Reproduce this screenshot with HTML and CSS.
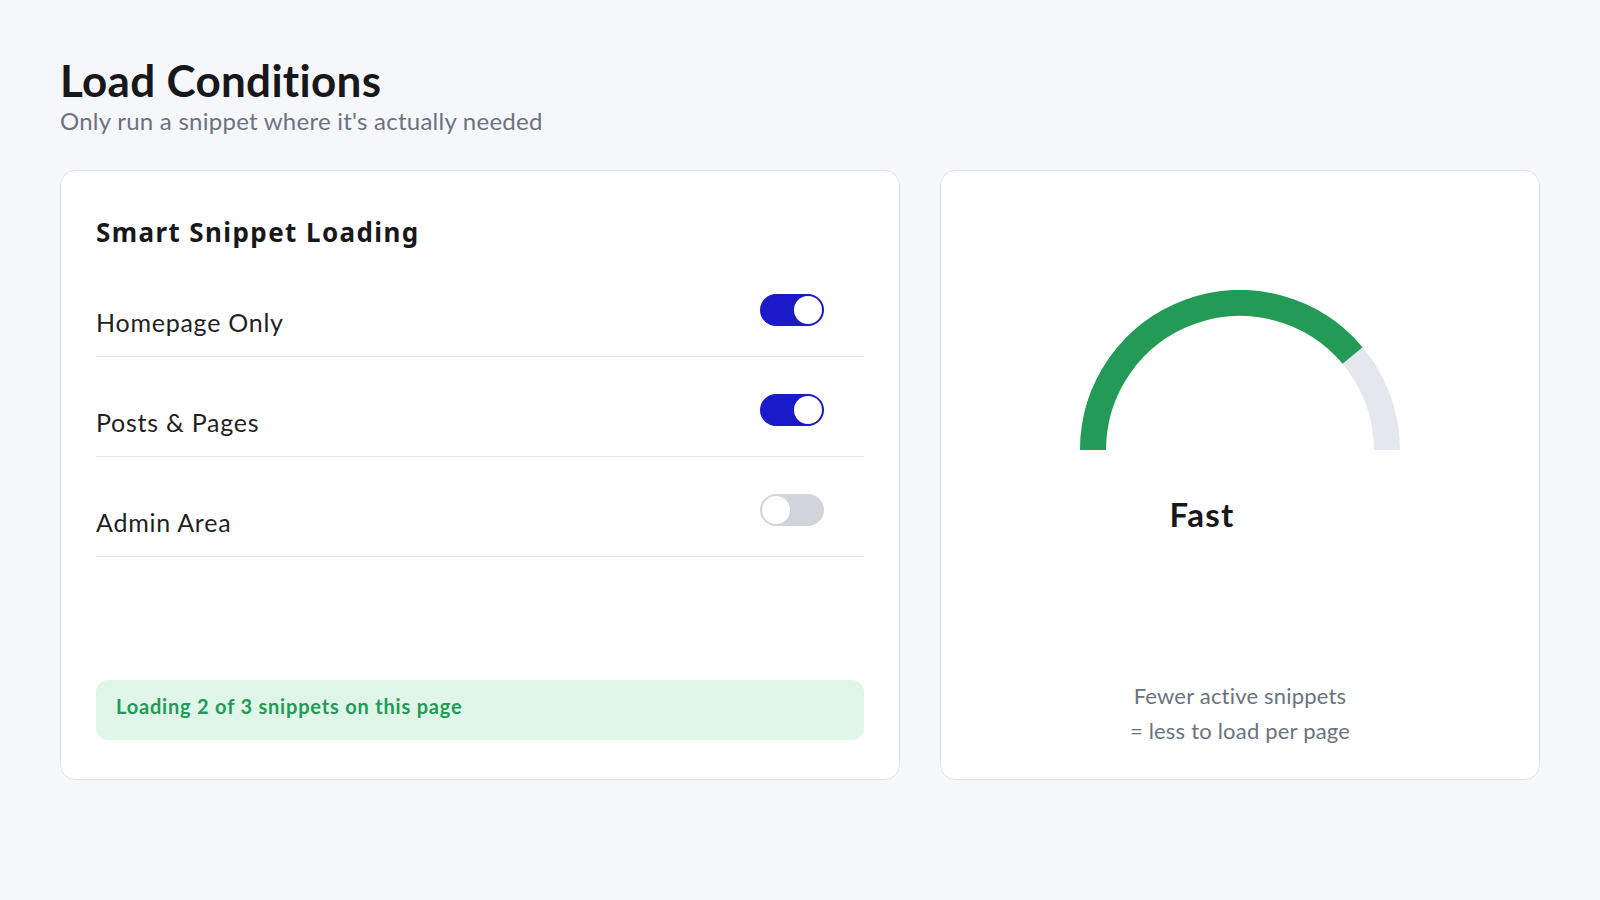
FILE: index.html
```html
<!DOCTYPE html>
<html lang="en">
<head>
<meta charset="utf-8">
<title>Load Conditions</title>
<link rel="stylesheet" href="styles.css">
</head>
<body>
<main class="page">
  <header class="header">
    <h1 class="title">Load Conditions</h1>
    <p class="subtitle">Only run a snippet where it's actually needed</p>
  </header>
  <section class="grid">
    <div class="card card-left">
      <h2 class="card-title">Smart Snippet Loading</h2>
      <div class="row">
        <span class="label">Homepage Only</span>
        <span class="toggle on"><span class="knob"></span></span>
      </div>
      <div class="row">
        <span class="label">Posts &amp; Pages</span>
        <span class="toggle on"><span class="knob"></span></span>
      </div>
      <div class="row">
        <span class="label">Admin Area</span>
        <span class="toggle off"><span class="knob"></span></span>
      </div>
      <div class="status">Loading 2 of 3 snippets on this page</div>
    </div>
    <div class="card card-right">
      <svg class="gauge" width="320" height="160" viewBox="0 0 320 160" aria-hidden="true">
        <path d="M13 160 A147 147 0 0 1 307 160" fill="none" stroke="#e5e7ef" stroke-width="26"/>
        <path d="M13 160 A147 147 0 0 1 272.6 65.5" fill="none" stroke="#239a55" stroke-width="26"/>
      </svg>
      <div class="speed">Fast</div>
      <p class="note">Fewer active snippets<br>= less to load per page</p>
    </div>
  </section>
</main>
</body>
</html>
```
FILE: styles.css
```css
* { box-sizing: border-box; }
html, body { margin: 0; padding: 0; }
body {
  background: #f6f7fb;
  font-family: Lato, "Noto Sans", "Liberation Sans", sans-serif;
  color: #1c1c1e;
}
.page {
  padding: 56px 60px 60px 60px;
}
.header { margin: 0; }
.title {
  margin: 0;
  font-size: 44px;
  line-height: 48px;
  font-weight: 700;
  letter-spacing: 0.3px;
  color: #18181b;
}
.subtitle {
  margin: 1px 0 0 0;
  font-size: 24px;
  line-height: 32px;
  letter-spacing: 0.25px;
  color: #6b7280;
}
.grid {
  margin-top: 33px;
  display: grid;
  grid-template-columns: 840px 600px;
  gap: 40px;
  height: 610px;
}
.card {
  background: #ffffff;
  border: 1px solid #e0e2ea;
  border-radius: 15px;
  display: flex;
  flex-direction: column;
}
.card-left {
  padding: 35px 35px 39px 35px;
}
.card-title {
  margin: 10px 0 9px 0;
  font-family: "Noto Sans", Lato, sans-serif;
  font-size: 26px;
  line-height: 32px;
  font-weight: 700;
  letter-spacing: 1.4px;
  color: #18181b;
}
.row {
  display: flex;
  justify-content: space-between;
  align-items: flex-start;
  height: 100px;
  padding: 37px 40px 0 0;
  border-bottom: 1px solid #e5e7eb;
}
.label {
  margin-top: 12px;
  font-size: 25px;
  line-height: 32px;
  letter-spacing: 0.75px;
  color: #1f1f23;
}
.toggle {
  position: relative;
  width: 64px;
  height: 32px;
  border-radius: 16px;
  flex: none;
}
.toggle.on { background: #1a1ac9; }
.toggle.off { background: #d1d5db; }
.knob {
  position: absolute;
  top: 2px;
  width: 28px;
  height: 28px;
  border-radius: 50%;
  background: #ffffff;
}
.toggle.on .knob { right: 2px; }
.toggle.off .knob { left: 2px; }
.status {
  margin-top: auto;
  height: 60px;
  padding: 12px 20px;
  border-radius: 12px;
  background: #e0f6e8;
  color: #239a55;
  font-size: 20px;
  line-height: 28px;
  font-weight: 700;
  letter-spacing: 0.8px;
}
.card-right {
  align-items: center;
  padding: 119px 35px 31px 35px;
}
.gauge { display: block; flex: none; }
.speed {
  margin: 44px 76px 0 0;
  font-size: 33px;
  line-height: 40px;
  font-weight: 700;
  letter-spacing: 1.2px;
  color: #18181b;
}
.note {
  margin: auto 0 0 0;
  text-align: center;
  font-size: 22px;
  line-height: 35px;
  letter-spacing: 0.2px;
  color: #6b7280;
}
```
